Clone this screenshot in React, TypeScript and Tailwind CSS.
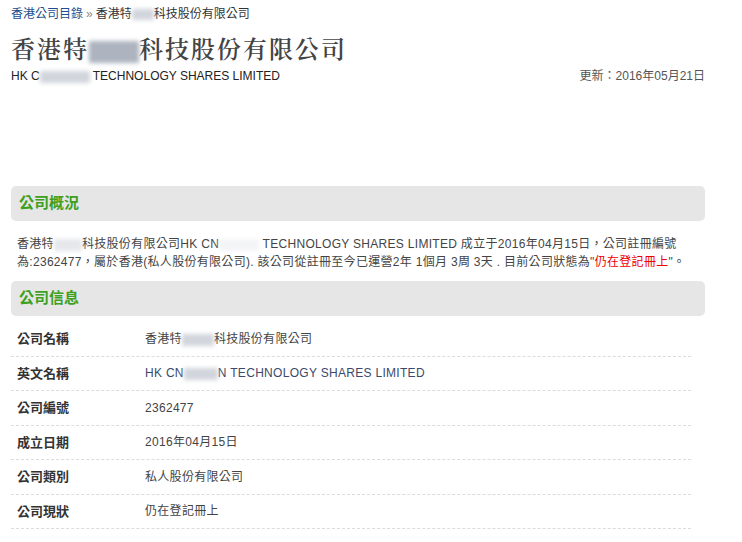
const font = "font-['Liberation_Sans','Noto_Sans_CJK_TC',sans-serif]";

function Blur({ w, h = 14, tone = "bg-gray-400/70" }: { w: number; h?: number; tone?: string }) {
  return (
    <span
      className={`inline-block align-middle blur-[2px] ${tone}`}
      style={{ width: w, height: h }}
    />
  );
}

export default function App() {
  const rows = [
    { label: "公司名稱", value: <>香港特<Blur w={32} h={12} tone="bg-gray-300" />科技股份有限公司</> },
    { label: "英文名稱", value: <span className="text-[#3b4a6b]">HK CN<Blur w={34} h={12} tone="bg-gray-300" />N TECHNOLOGY SHARES LIMITED</span> },
    { label: "公司編號", value: "2362477" },
    { label: "成立日期", value: "2016年04月15日" },
    { label: "公司類別", value: "私人股份有限公司" },
    { label: "公司現狀", value: "仍在登記冊上" },
  ];

  return (
    <div className={`w-[742px] h-[542px] bg-white overflow-hidden ${font}`}>
      <div className="w-[694px] ml-[11px]">
        <div className="pt-[6px] h-[24px] text-[12px] leading-[16px] text-[#333]">
          <span className="text-[#1b4f8f]">香港公司目錄</span>
          <span className="text-[#888] mx-[3px]">»</span>
          香港特<Blur w={22} h={11} tone="bg-gray-300" />科技股份有限公司
        </div>

        <h1 className="mt-[9px] text-[24px] leading-[30px] tracking-[2px] font-semibold text-[#444] font-['Noto_Serif_CJK_TC','Noto_Sans_CJK_TC',serif]">
          香港特<Blur w={50} h={22} tone="bg-gray-400/80" />科技股份有限公司
        </h1>

        <div className="mt-[5px] flex justify-between items-center text-[12px] leading-[16px]">
          <span className="text-[#222]">
            HK C<Blur w={50} h={12} tone="bg-gray-300" /> TECHNOLOGY SHARES LIMITED
          </span>
          <span className="text-[#555]">更新：2016年05月21日</span>
        </div>

        <div className="mt-[102px] h-[35px] rounded-[5px] bg-[#e6e6e6] flex items-center px-[8px]">
          <span className="text-[15px] font-bold text-[#3da01e]">公司概況</span>
        </div>

        <p className="mt-[14px] px-[6px] text-[12px] leading-[18px] text-[#444] tracking-[0.3px]">
          香港特<Blur w={28} h={12} tone="bg-gray-200" />科技股份有限公司HK CN<Blur w={40} h={12} tone="bg-gray-100" /> TECHNOLOGY SHARES LIMITED 成立于2016年04月15日，公司註冊編號
          <br />
          為:2362477，屬於香港(私人股份有限公司). 該公司從註冊至今已運營2年 1個月 3周 3天 . 目前公司狀態為"<span className="text-[#e00]">仍在登記冊上</span>"。
        </p>

        <div className="mt-[10px] h-[35px] rounded-[5px] bg-[#e6e6e6] flex items-center px-[8px]">
          <span className="text-[15px] font-bold text-[#3da01e]">公司信息</span>
        </div>

        <div className="mt-[6px] w-[680px]">
          {rows.map((r) => (
            <div key={r.label} className="h-[34.5px] flex items-center border-b border-dashed border-[#dcdcdc] px-[6px]">
              <span className="w-[128px] text-[13px] font-bold text-[#333]">{r.label}</span>
              <span className="text-[12px] text-[#444] tracking-[0.3px]">{r.value}</span>
            </div>
          ))}
        </div>
      </div>
    </div>
  );
}
